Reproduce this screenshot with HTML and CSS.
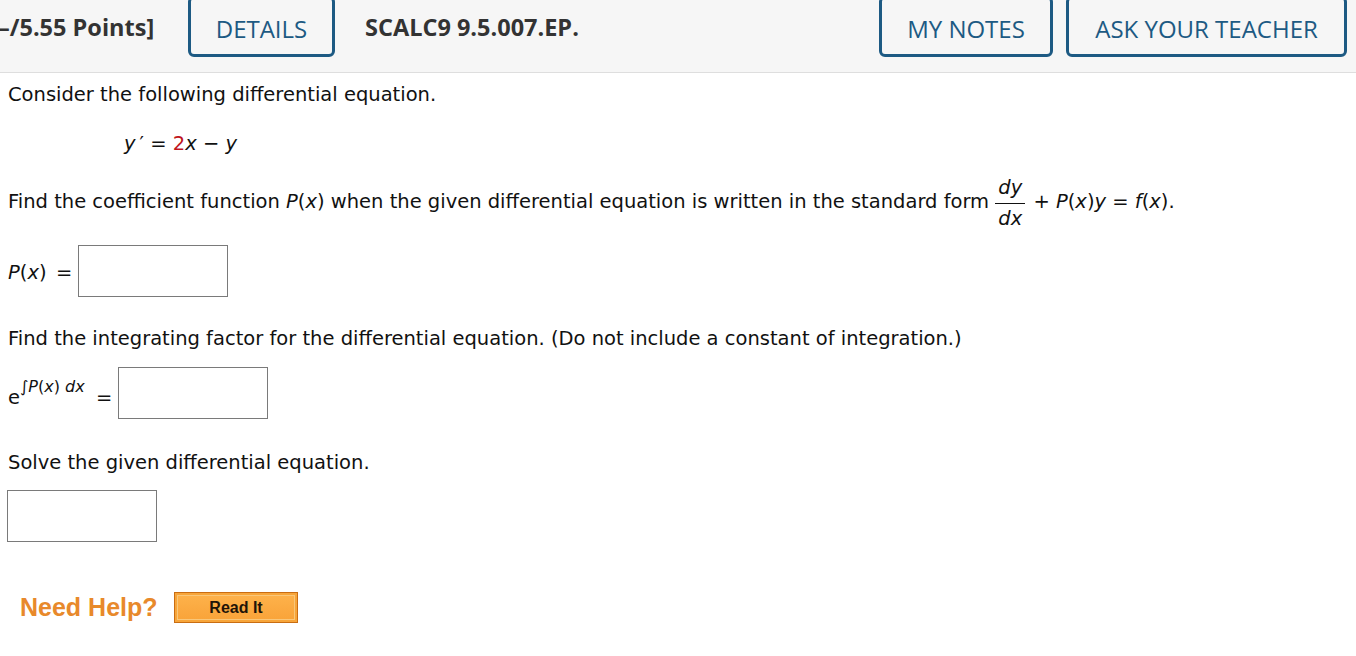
FILE: index.html
```html
<!DOCTYPE html>
<html>
<head>
<meta charset="utf-8">
<link rel="stylesheet" href="styles.css">
</head>
<body>
<div class="topbar">
  <div class="points">–/5.55 Points]</div>
  <div class="btn details">DETAILS</div>
  <div class="code">SCALC9 9.5.007.EP.</div>
  <div class="spacer"></div>
  <div class="btn notes">MY NOTES</div>
  <div class="btn teacher">ASK YOUR TEACHER</div>
</div>
<div class="content">
  <p class="line l1">Consider the following differential equation.</p>
  <p class="line eq"><i>y</i><span class="prime">&#8242;</span> = <span class="red">2</span><i>x</i> − <i>y</i></p>
  <p class="line l3">Find the coefficient function <i>P</i>(<i>x</i>) when the given differential equation is written in the standard form <span class="frac"><span class="num"><i>dy</i></span><span class="den"><i>dx</i></span></span> + <i>P</i>(<i>x</i>)<i>y</i> = <i>f</i>(<i>x</i>).</p>
  <div class="answer a1"><span class="lbl"><i>P</i>(<i>x</i>)</span><span class="eqs">=</span><span class="box"></span></div>
  <p class="line l5">Find the integrating factor for the differential equation. (Do not include a constant of integration.)</p>
  <div class="answer a2"><span class="lbl">e<sup>∫<i>P</i>(<i>x</i>) <i>dx</i></sup></span><span class="eqs">=</span><span class="box"></span></div>
  <p class="line l7">Solve the given differential equation.</p>
  <div class="answer a3"><span class="box"></span></div>
  <div class="help">
    <span class="need">Need Help?</span>
    <span class="readit"><span class="inner">Read It</span></span>
  </div>
</div>
</body>
</html>
```
FILE: styles.css
```css
html, body {
  margin: 0;
  padding: 0;
  background: #fff;
}
body {
  font-family: "DejaVu Sans", Verdana, sans-serif;
  color: #111;
  overflow: hidden;
}
.topbar {
  height: 73px;
  background: #f6f6f6;
  border-bottom: 1px solid #dedede;
  display: flex;
  align-items: flex-start;
  font-family: "Open Sans", sans-serif;
  box-sizing: border-box;
}
.points {
  font-size: 23.5px;
  font-weight: 700;
  color: #333;
  margin-left: -2px;
  margin-top: 11px;
  width: 190px;
}
.btn {
  box-sizing: border-box;
  height: 61px;
  margin-top: -4px;
  border: 3px solid #1d5a83;
  border-radius: 6px;
  color: #1d5a83;
  font-size: 24px;
  display: flex;
  align-items: center;
  justify-content: center;
  padding-top: 3px;
  background: #f6f6f6;
}
.details { width: 147px; }
.code {
  font-size: 23.5px;
  font-weight: 700;
  color: #333;
  margin-left: 30px;
  margin-top: 11px;
}
.spacer { flex: 1; }
.notes { width: 174px; }
.teacher { width: 281px; margin-left: 13px; margin-right: 9px; }

.content {
  padding-left: 8px;
  font-size: 19.5px;
}
.line {
  margin: 0;
  line-height: 24px;
}
.l1 { margin-top: 10px; }
.eq { margin-top: 25px; margin-left: 116px; }
.prime { margin-left: 4px; }
.red { color: #c0141c; }
.l3 { margin-top: 34px; }
.frac {
  display: inline-flex;
  flex-direction: column;
  align-items: center;
  vertical-align: middle;
  line-height: 24px;
  margin: -22px 2px -22px 0;
  position: relative;
  top: 1px;
}
.num { border-bottom: 1px solid #111; padding: 0 3px 3px; }
.den { padding: 3px 3px 0; }

.answer {
  display: flex;
  align-items: center;
}
.box {
  display: inline-block;
  width: 148px;
  height: 50px;
  border: 1px solid #7a7a7a;
  background: #fff;
}
.a1 { margin-top: 31px; }
.a1 .lbl { width: 48px; position: relative; top: 1px; }
.a1 .eqs { width: 22px; position: relative; top: 1px; }
.l5 { margin-top: 30px; }
.a2 { margin-top: 16px; }
.a2 .lbl { width: 88px; position: relative; top: 0; }
.a2 sup { font-size: 16px; vertical-align: 12px; }
.a2 .eqs { width: 22px; position: relative; top: 4px; }
.l7 { margin-top: 32px; }
.a3 { margin-top: 15px; margin-left: -1px; }

.help {
  display: flex;
  align-items: center;
  margin-top: 50px;
  margin-left: 12px;
}
.need {
  font-family: "Liberation Sans", Arial, sans-serif;
  font-weight: bold;
  font-size: 25px;
  color: #e8892b;
  width: 154px;
}
.readit {
  display: inline-block;
  box-sizing: border-box;
  width: 124px;
  height: 31px;
  border: 1px solid #c96d12;
  background: #f7a53a;
  padding: 2px;
}
.readit .inner {
  display: flex;
  align-items: center;
  justify-content: center;
  box-sizing: border-box;
  height: 100%;
  border: 1px solid #f9c77a;
  background: linear-gradient(#fdb14a, #f9a43a);
  font-family: "Liberation Sans", Arial, sans-serif;
  font-weight: bold;
  font-size: 16px;
  color: #1f1408;
}
```
